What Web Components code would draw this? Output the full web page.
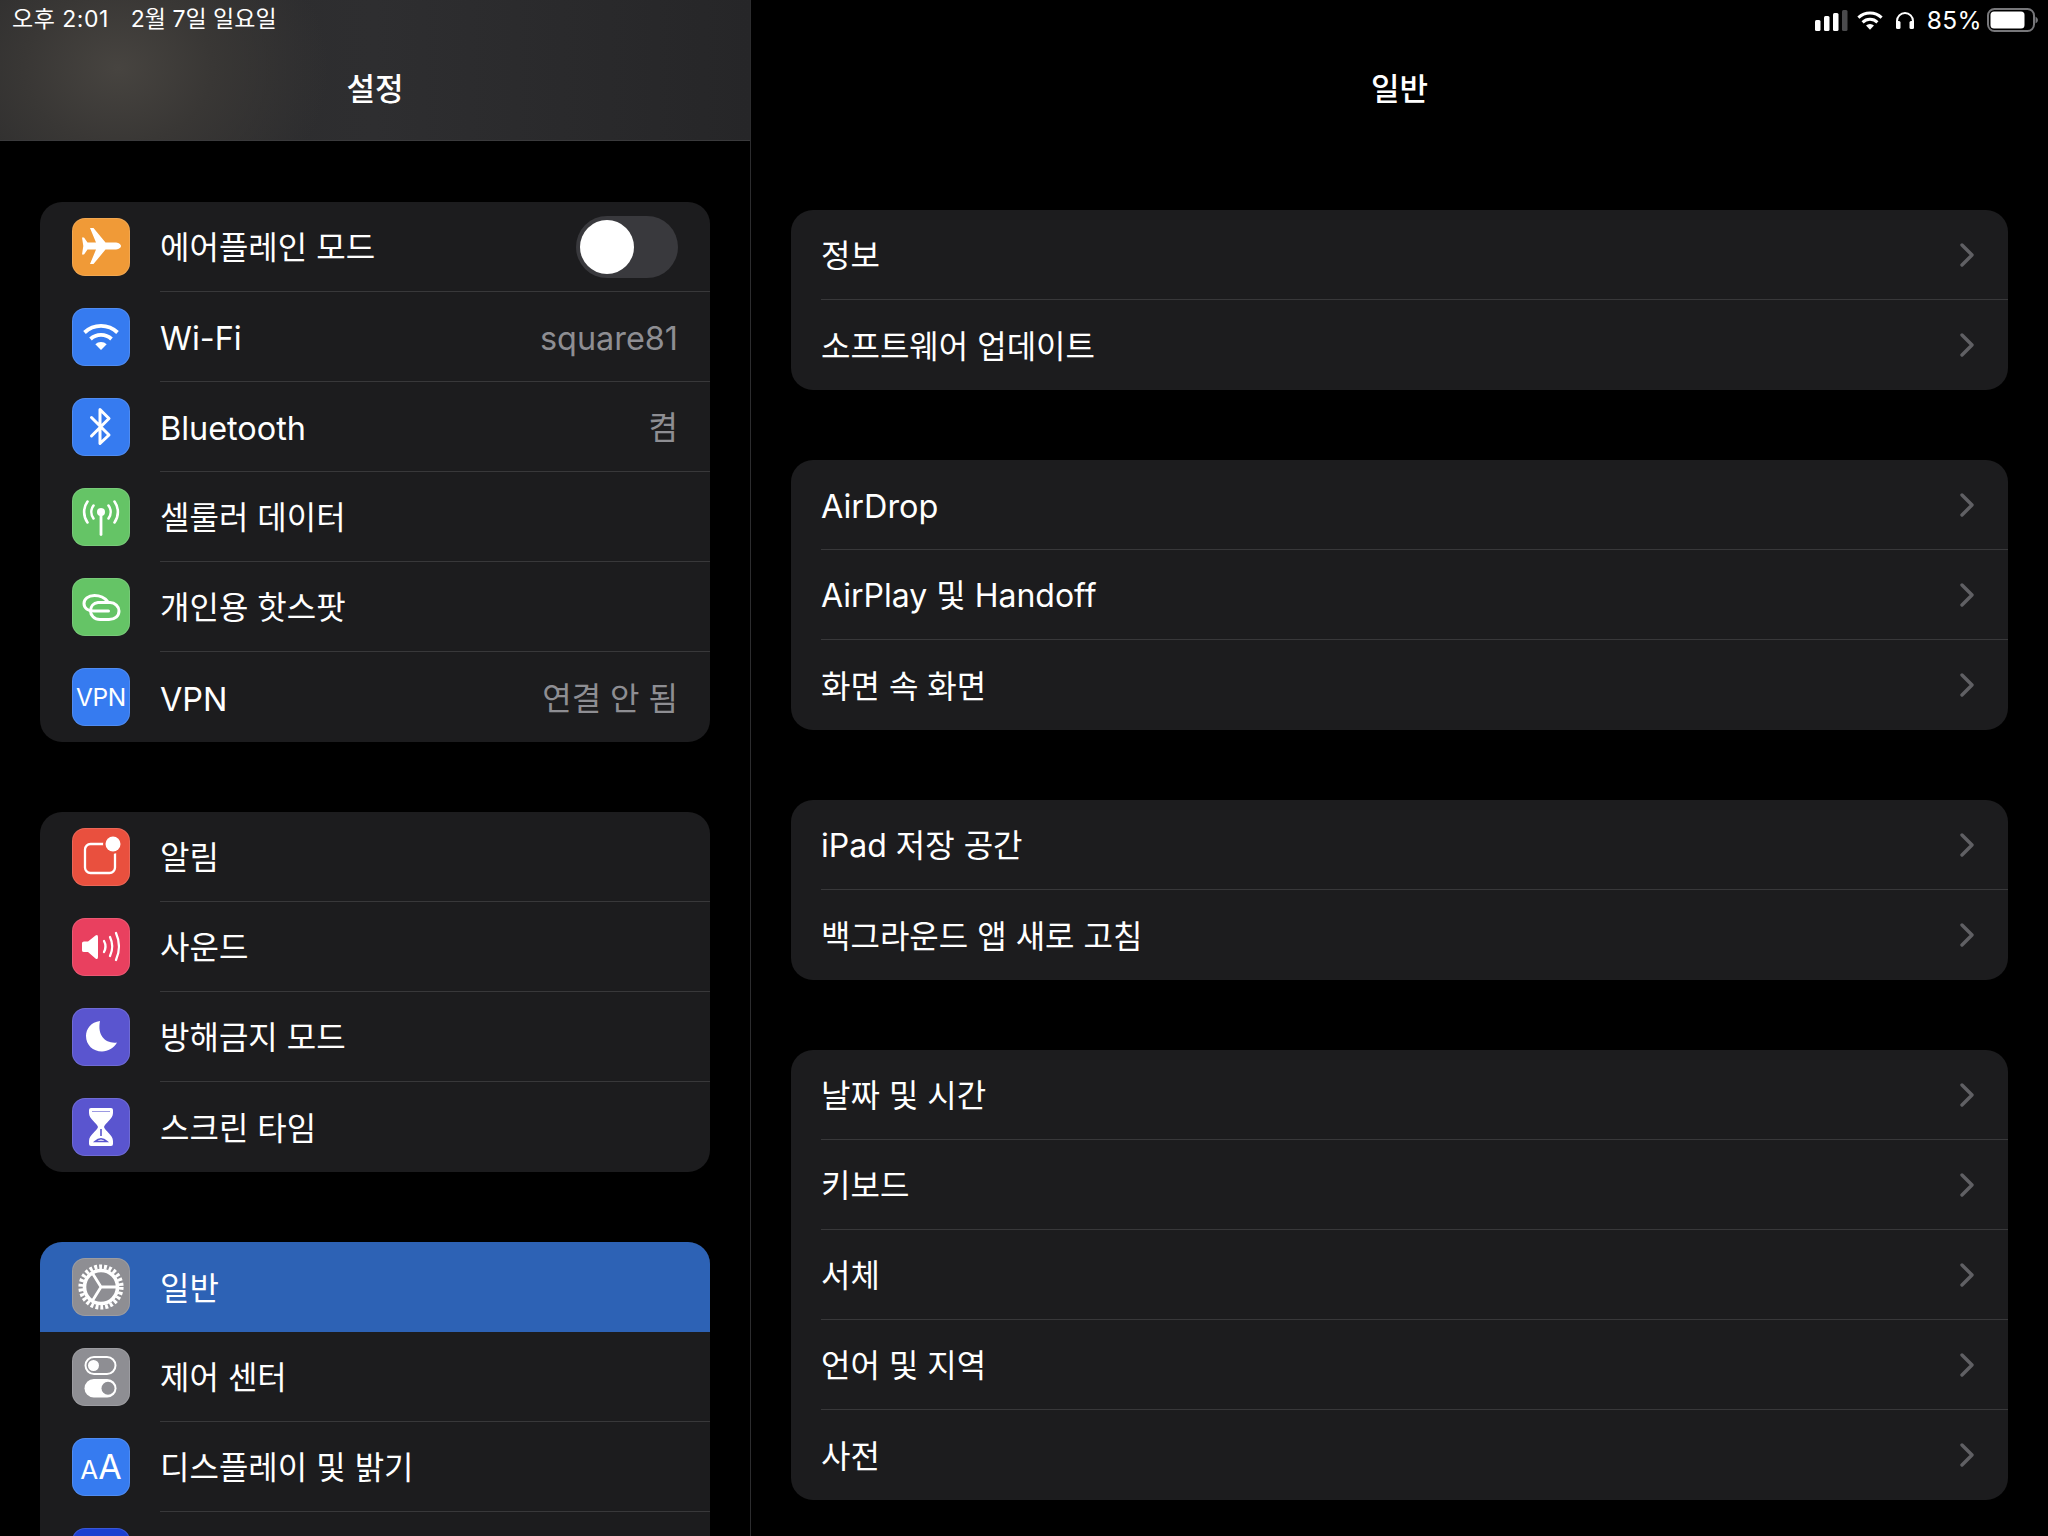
<!DOCTYPE html>
<html lang="ko">
<head>
<meta charset="utf-8">
<title>설정</title>
<style>
html,body{margin:0;height:1536px;background:#000;overflow:hidden}
body{font-family:Inter,"Noto Sans CJK KR",sans-serif;color:#fff}
</style>
</head>
<body>
<ipad-screen>
  <settings-sidebar slot="side">
    <setting-group>
      <setting-row icon="plane" label="에어플레인 모드" toggle></setting-row>
      <setting-row icon="wifi" label="Wi-Fi" value="square81"></setting-row>
      <setting-row icon="bluetooth" label="Bluetooth" value="켬"></setting-row>
      <setting-row icon="cellular" label="셀룰러 데이터"></setting-row>
      <setting-row icon="hotspot" label="개인용 핫스팟"></setting-row>
      <setting-row icon="vpn" label="VPN" value="연결 안 됨" last></setting-row>
    </setting-group>
    <setting-group>
      <setting-row icon="alert" label="알림"></setting-row>
      <setting-row icon="sound" label="사운드"></setting-row>
      <setting-row icon="moon" label="방해금지 모드"></setting-row>
      <setting-row icon="hourglass" label="스크린 타임" last></setting-row>
    </setting-group>
    <setting-group>
      <setting-row icon="gear" label="일반" selected last></setting-row>
      <setting-row icon="control" label="제어 센터"></setting-row>
      <setting-row icon="display" label="디스플레이 및 밝기"></setting-row>
      <setting-row icon="wallpaper" label="" last></setting-row>
    </setting-group>
  </settings-sidebar>
  <settings-detail slot="main">
    <setting-group>
      <setting-row label="정보" chevron></setting-row>
      <setting-row label="소프트웨어 업데이트" chevron last></setting-row>
    </setting-group>
    <setting-group>
      <setting-row label="AirDrop" chevron></setting-row>
      <setting-row label="AirPlay 및 Handoff" chevron></setting-row>
      <setting-row label="화면 속 화면" chevron last></setting-row>
    </setting-group>
    <setting-group>
      <setting-row label="iPad 저장 공간" chevron></setting-row>
      <setting-row label="백그라운드 앱 새로 고침" chevron last></setting-row>
    </setting-group>
    <setting-group>
      <setting-row label="날짜 및 시간" chevron></setting-row>
      <setting-row label="키보드" chevron></setting-row>
      <setting-row label="서체" chevron></setting-row>
      <setting-row label="언어 및 지역" chevron></setting-row>
      <setting-row label="사전" chevron last></setting-row>
    </setting-group>
  </settings-detail>
</ipad-screen>

<script>
const ICONS = {
  plane:{bg:'#f09a37',svg:'<path fill="#fff" d="M49 28c0-2-3-3.600-6-3.600H33.500L21.500 10h-3.500L24 24.400H15.500L12 19.500H10L11.300 28 10 36.500H12L15.500 31.600H24L18 46h3.500L33.500 31.600H43C46 31.600 49 30 49 28Z"/>'},
  wifi:{bg:'#367bf0',svg:'<g fill="none" stroke="#fff" stroke-width="3.800"><path d="M12.500 24.500A24 24 0 0 1 45.500 24.500"/><path d="M18.500 31A15.500 15.500 0 0 1 39.500 31"/></g><path fill="#fff" d="M29 42 23.300 36.300A8 8 0 0 1 34.700 36.300Z"/>'},
  bluetooth:{bg:'#367bf0',svg:'<path fill="none" stroke="#fff" stroke-width="3" stroke-linecap="round" stroke-linejoin="round" d="M19.500 19.500 37 37 28 45.500V11.500L37 20.500 19.500 38"/>'},
  cellular:{bg:'#65c466',svg:'<g fill="none" stroke="#fff" stroke-width="2.600" stroke-linecap="round"><path d="M29 25V46.500" stroke-width="2.800"/><path d="M21.500 17.500A11 11 0 0 0 21.500 30.500"/><path d="M36.500 17.500A11 11 0 0 1 36.500 30.500"/><path d="M15.500 13.500A18 18 0 0 0 15.500 34.500"/><path d="M42.500 13.500A18 18 0 0 1 42.500 34.500"/></g><circle cx="29" cy="24" r="4" fill="#fff"/>'},
  hotspot:{bg:'#65c466',svg:'<g fill="none" stroke="#fff" stroke-width="3" stroke-linecap="round" stroke-linejoin="round"><path d="M36.500 33H22C16 33 12 30 12 25.500 12 21 16 17.500 22.500 17.500 28.500 17.500 32.500 19.500 35.500 23.500"/><path d="M26 24.500H38C43 24.500 47 28.500 47 33 47 38 43 41.500 37 41.500H28C22 41.500 18.500 37 18.500 33 18.500 28.500 21.500 25 26 24.500Z"/></g>'},
  vpn:{bg:'#367bf0',text:'VPN'},
  alert:{bg:'#e9503e',svg:'<rect x="13" y="16" width="30" height="29" rx="5.500" fill="none" stroke="#fff" stroke-width="2.300"/><circle cx="41" cy="16" r="10" fill="#e9503e"/><circle cx="41" cy="16" r="7.500" fill="#fff"/>'},
  sound:{bg:'#e9405f',svg:'<path fill="#fff" d="M10 25Q10 23.500 12 23.500H16L23.500 17.500Q26 16 26 19V39Q26 42 23.500 40.500L16 34H12Q10 34 10 32.500Z"/><g fill="none" stroke="#fff" stroke-width="2.300" stroke-linecap="round"><path d="M32 23Q35 28.500 32 34"/><path d="M38 19Q42.500 28.500 38 38"/><path d="M44 15Q50 28.500 44 42"/></g>'},
  moon:{bg:'#5a55cf',svg:'<path fill="#fff" d="M28 13C19 14 14 21 14 28 14 37 21 43.500 30 43.500 36 43.500 42 40 45 34.500 34 36 25 28 28 13Z"/>'},
  hourglass:{bg:'#5a55cf',svg:'<path fill="#fff" d="M19 10H39Q41 10 41 12V15C41 21 33 25 32 29 33 33 41 37 41 43V46Q41 48 39 48H19Q17 48 17 46V43C17 37 25 33 26 29 25 25 17 21 17 15V12Q17 10 19 10Z"/><path fill="none" stroke="#5a55cf" stroke-width="1.600" d="M29 31V38M23 43.500Q29 38 35 43.500Z"/><path fill="#5a55cf" d="M20 13H38V14H20Z" opacity=".6"/>'},
  gear:{bg:'#8e8e93',svg:'<g fill="none" stroke="#fff"><circle cx="29" cy="29" r="20.300" stroke-width="4.600" stroke-dasharray="2.900 2.005"/><circle cx="29" cy="29" r="16.500" stroke-width="3.600"/><path stroke-width="2.800" d="M29 29H44M29 29 20 14.500M29 29 20 43.500"/></g>'},
  control:{bg:'#8e8e93',svg:'<rect x="13.500" y="9" width="30" height="17" rx="8.500" fill="none" stroke="#fff" stroke-width="2"/><circle cx="21.500" cy="17.500" r="5.500" fill="#fff"/><rect x="12.500" y="31" width="32" height="18.500" rx="9.250" fill="#fff"/><circle cx="36" cy="40.250" r="6.500" fill="#8e8e93"/>'},
  display:{bg:'#367bf0',aa:true},
  wallpaper:{bg:'#1c3fd0',svg:''}
};

const HANGUL = /[\uAC00-\uD7A3]/;
const tuneText = (node, text) => {
  if (HANGUL.test(text)) node.style.paddingBottom = '3px';
  else { node.style.paddingTop = '4px'; node.style.fontSize = '32.4px'; }
};

const define = (name, css, html, setup) => {
  customElements.define(name, class extends HTMLElement {
    constructor(){
      super();
      const root = this.attachShadow({mode:'open'});
      root.innerHTML = `<style>${css}</style>${html}`;
    }
    connectedCallback(){ if(setup) setup(this, this.shadowRoot); }
  });
};

define('ipad-screen',
  `:host{display:flex;width:2048px;height:1536px;overflow:hidden;background:#000}
   .side{flex:0 0 751px;box-sizing:border-box;border-right:1px solid #2c2c2e;height:100%;overflow:hidden}
   .main{flex:1;min-width:0;height:100%;overflow:hidden}`,
  `<div class="side"><slot name="side"></slot></div><div class="main"><slot name="main"></slot></div>`);

define('status-time',
  `:host{display:flex;gap:22px;font-size:23px;line-height:38px;padding-left:12px}
   .a{letter-spacing:.5px}`,
  `<span class="a">오후 2:01</span><span>2월 7일 일요일</span>`);

define('status-icons',
  `:host{display:flex;align-items:center;justify-content:flex-end;height:38px;padding:2px 10px 0 0;box-sizing:border-box;font-size:24.500px;letter-spacing:.4px}
   svg{display:block}
   .signal{margin-right:9px}.wifi{margin-right:12px}.phones{margin-right:12px}.pct{margin-right:5px}`,
  `<svg class="signal" width="33" height="21" viewBox="0 0 33 21"><rect x="0" y="10" width="5.500" height="11" rx="1.500" fill="#fff"/><rect x="9" y="6" width="5.500" height="15" rx="1.500" fill="#fff"/><rect x="18" y="3" width="5.500" height="18" rx="1.500" fill="#fff"/><rect x="27" y="0" width="5.500" height="21" rx="1.500" fill="#4a4a4c"/></svg>
   <svg class="wifi" width="26" height="20" viewBox="0 0 28 21"><g fill="none" stroke="#fff" stroke-width="3.200"><path d="M1.500 8A18 18 0 0 1 26.500 8"/><path d="M6 13A11.500 11.500 0 0 1 22 13"/></g><path fill="#fff" d="M14 21 9.700 16.500A6 6 0 0 1 18.300 16.500Z"/></svg>
   <svg class="phones" width="20" height="17" viewBox="0 0 20 17"><path fill="none" stroke="#fff" stroke-width="2" d="M2 12V9A8 8 0 0 1 18 9V12"/><rect x="1" y="9" width="4.500" height="8" rx="1.500" fill="#fff"/><rect x="14.500" y="9" width="4.500" height="8" rx="1.500" fill="#fff"/></svg>
   <span class="pct">85%</span>
   <svg width="51" height="24" viewBox="0 0 51 24"><rect x="1" y="1" width="46" height="22" rx="6.500" fill="none" stroke="#77777a" stroke-width="2"/><rect x="3.500" y="3.500" width="34" height="17" rx="3.500" fill="#fff"/><path d="M48.500 8.500Q51 10 51 12T48.500 15.500Z" fill="#77777a"/></svg>`);

define('nav-bar',
  `:host{display:block;height:141px;box-sizing:border-box}
   :host([blur]){border-bottom:1px solid #3a3a3c;background:radial-gradient(ellipse 210px 170px at 118px 68px,#474440 0%,#393735 45%,rgba(46,46,48,0) 100%),linear-gradient(90deg,#2a2a2b,#2e2e30 50%,#262628)}
   .title{text-align:center;font-size:31px;font-weight:500;line-height:40px;padding-top:31px}`,
  `<slot name="status"></slot><div class="title"><slot></slot></div>`);

define('settings-sidebar',
  `:host{display:block}
   .list{display:flex;flex-direction:column;gap:70px;padding:61px 0 0 40px;width:670px}`,
  `<nav-bar blur><status-time slot="status"></status-time>설정</nav-bar><div class="list"><slot></slot></div>`);

define('settings-detail',
  `:host{display:block}
   .list{display:flex;flex-direction:column;gap:70px;padding:69px 0 0 40px;width:1217px}`,
  `<nav-bar><status-icons slot="status"></status-icons>일반</nav-bar><div class="list"><slot></slot></div>`);

define('setting-group',
  `:host{display:block;background:#1c1c1e;border-radius:22px;overflow:hidden}`,
  `<slot></slot>`);

define('toggle-switch',
  `:host{display:block;width:102px;height:62px;border-radius:31px;background:#39393d;box-sizing:border-box;padding:4px;flex:none}
   i{display:block;width:54px;height:54px;border-radius:50%;background:#fff}`,
  `<i></i>`);

define('setting-icon',
  `:host{display:block;width:58px;height:58px;flex:none;border-radius:13px;box-shadow:inset 0 0 0 1px rgba(255,255,255,.13);overflow:hidden}
   svg{display:block;width:58px;height:58px}
   .t{display:flex;width:58px;height:58px;align-items:center;justify-content:center;color:#fff;font-size:24.500px;letter-spacing:-.4px}
   .aa{display:flex;width:58px;height:58px;align-items:baseline;justify-content:center;line-height:58px;color:#fff;font-size:34px;font-weight:400}
   .aa small{font-size:26px}`,
  ``,
  (el, root) => {
    const d = ICONS[el.getAttribute('name')];
    el.style.background = d.bg;
    const box = document.createElement('div');
    if (d.text) box.innerHTML = `<div class="t">${d.text}</div>`;
    else if (d.aa) box.innerHTML = `<div class="aa"><small>A</small>A</div>`;
    else box.innerHTML = `<svg viewBox="0 0 58 58">${d.svg}</svg>`;
    root.append(box);
  });

define('setting-row',
  `:host{display:flex;align-items:center;height:90px;gap:30px;padding-left:32px}
   :host([plain]){padding-left:30px}
   :host([selected]){background:#2d62b5}
   .c{flex:1;min-width:0;align-self:stretch;display:flex;align-items:center;justify-content:space-between;box-sizing:border-box;border-bottom:1px solid #38383a;padding-right:32px;font-size:32px}
   :host([last]) .c{border-bottom:0}
   :host([plain]) .c{padding-right:34px}
   .v{color:#8e8e93}
   .chev{display:block;flex:none}`,
  `<span id="ic" style="display:contents"></span><div class="c"><span class="l"></span><span class="r" style="display:contents"></span></div>`,
  (el, root) => {
    const l = root.querySelector('.l');
    const text = el.getAttribute('label') || '';
    l.textContent = text;
    if (text) tuneText(l, text);
    const ic = el.getAttribute('icon');
    if (ic) { const i = document.createElement('setting-icon'); i.setAttribute('name', ic); root.getElementById('ic').append(i); }
    else el.setAttribute('plain','');
    const r = root.querySelector('.r');
    if (el.hasAttribute('toggle')) r.append(document.createElement('toggle-switch'));
    else if (el.getAttribute('value')) { const v = document.createElement('span'); v.className='v'; v.textContent = el.getAttribute('value'); tuneText(v, v.textContent); r.append(v); }
    else if (el.hasAttribute('chevron')) r.innerHTML = `<svg class="chev" width="14" height="24" viewBox="0 0 14 24"><path fill="none" stroke="#606064" stroke-width="3.400" stroke-linecap="round" stroke-linejoin="round" d="M2 2 12 12 2 22"/></svg>`;
  });
</script>
</body>
</html>
